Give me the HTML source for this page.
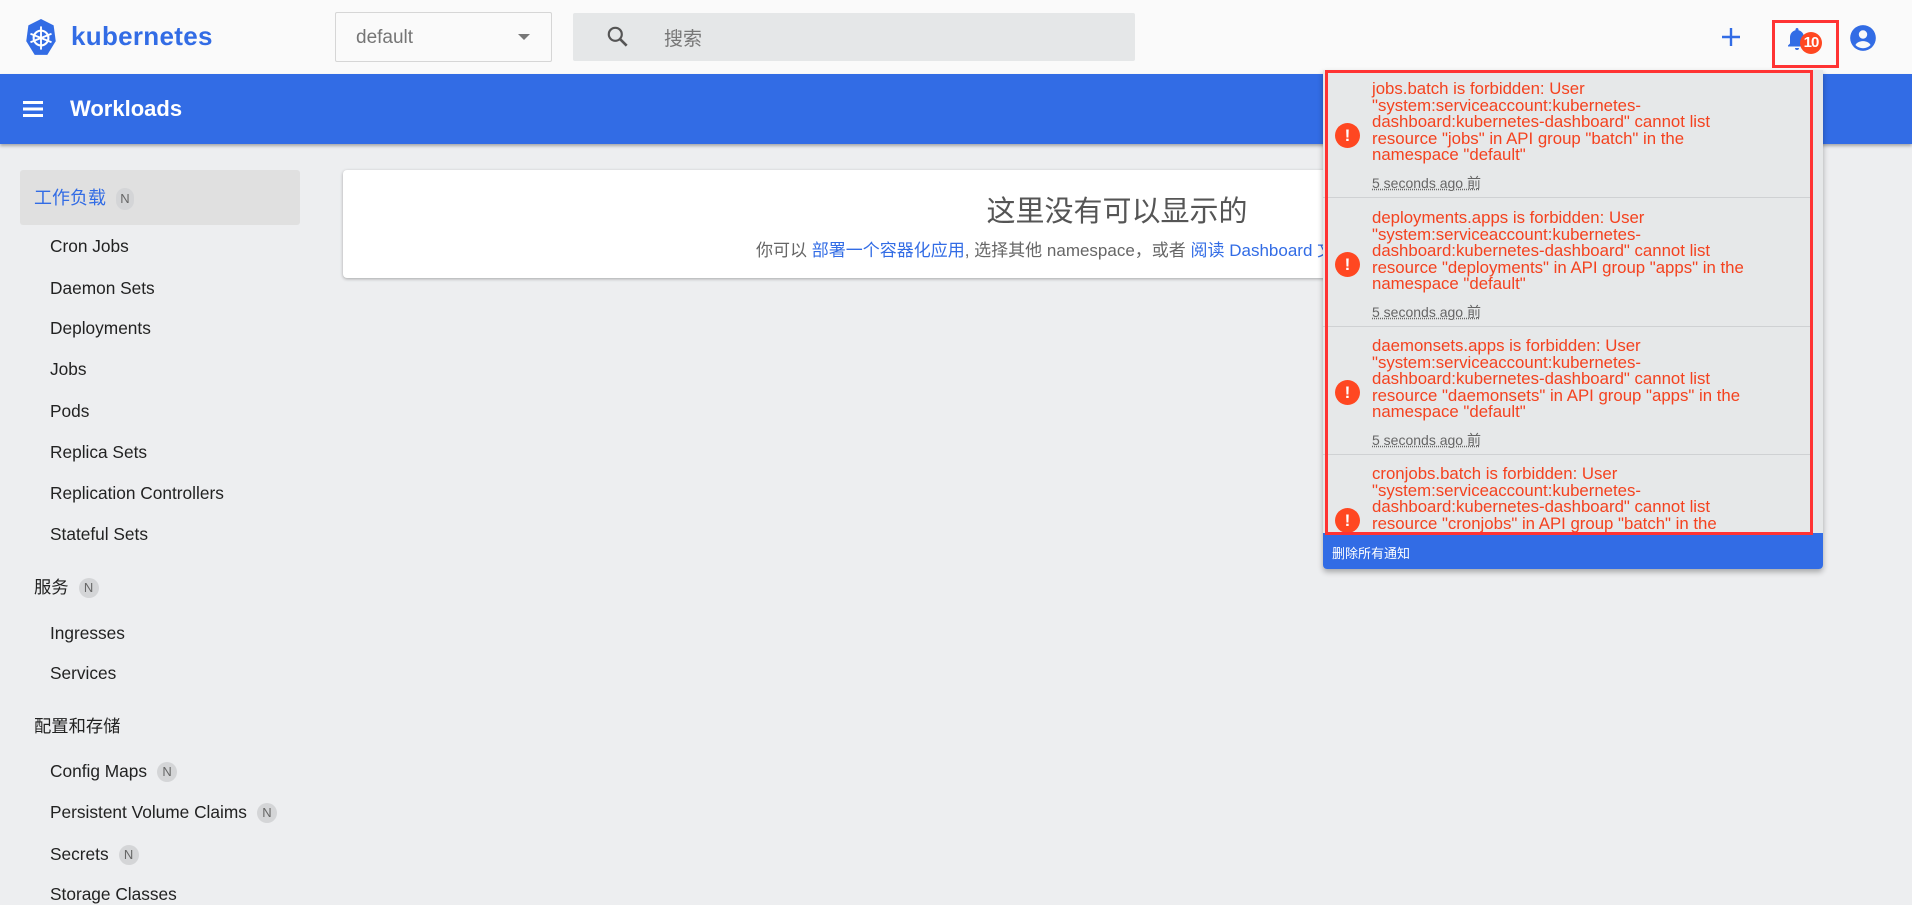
<!DOCTYPE html>
<html><head><meta charset="utf-8"><style>
*{box-sizing:border-box;margin:0;padding:0}
body{width:1912px;height:894px;overflow:hidden;background:#edeef0;font-family:"Liberation Sans","Noto Sans CJK SC",sans-serif;position:relative}
.hdr{position:absolute;left:0;top:0;width:1912px;height:74px;background:#fafafa}
.bar{position:absolute;left:0;top:74px;width:1912px;height:70px;background:#326ce5;box-shadow:0 2px 3px rgba(0,0,0,.3)}
.abs{position:absolute}
.side{position:absolute;left:50px;font-size:17.3px;color:#222}
.grp{position:absolute;left:34px;font-size:17.3px;color:#222}
.n{display:inline-block;width:20px;height:20px;border-radius:10px;background:#d4d5d7;color:#666;font-size:13px;text-align:center;line-height:20px;margin-left:10px;vertical-align:1px}
.pop{position:absolute;left:1323px;top:70px;width:500px;height:499px;background:#e6e8e9;border-radius:0 0 4px 4px;box-shadow:0 3px 6px rgba(0,0,0,.3);overflow:hidden}
.item{position:absolute;left:0;width:490px;height:128px;border-bottom:1px solid #cfd1d3}
.msg{position:absolute;left:49px;top:11px;width:386px;font-size:16.8px;line-height:16.5px;color:#f4421f}
.ts{position:absolute;left:49px;font-size:14px;color:#666;text-decoration:underline dotted}
.ic{position:absolute;left:12px;width:25px;height:25px;border-radius:50%;background:#ff4721;color:#fff;font-weight:bold;font-size:17px;text-align:center;line-height:25px}
</style></head><body>
<div class="hdr"></div>
<svg class="abs" style="left:24px;top:18px" width="34" height="40" viewBox="0 0 28 38"><polygon points="14,1 26,7 28,22 20,35 8,35 0,22 2,7" fill="#326ce5"/><circle cx="14" cy="19" r="7" fill="none" stroke="#fff" stroke-width="2"/><g stroke="#fff" stroke-width="1.8"><line x1="14" y1="8" x2="14" y2="30"/><line x1="4" y1="15" x2="24" y2="23"/><line x1="24" y1="15" x2="4" y2="23"/></g></svg>
<div class="abs" style="left:71px;top:21px;font-size:26px;font-weight:bold;color:#326ce5;letter-spacing:0.3px">kubernetes</div>
<div class="abs" style="left:335px;top:12px;width:217px;height:50px;border:1px solid #d6d6d6;border-radius:2px;background:#fafafa"></div>
<div class="abs" style="left:356px;top:27px;font-size:19px;color:#757575">default</div>
<div class="abs" style="left:518px;top:34px;width:0;height:0;border-left:6px solid transparent;border-right:6px solid transparent;border-top:6px solid #777"></div>
<div class="abs" style="left:573px;top:13px;width:562px;height:48px;background:#e5e7e8;border-radius:2px"></div>
<svg class="abs" style="left:605px;top:24px" width="26" height="26" viewBox="0 0 24 24"><circle cx="9.5" cy="9.5" r="6" fill="none" stroke="#555" stroke-width="2"/><line x1="14" y1="14" x2="20" y2="20" stroke="#555" stroke-width="2.4"/></svg>
<div class="abs" style="left:664px;top:24px;font-size:19px;color:#777">搜索</div>
<svg class="abs" style="left:1719px;top:25px" width="24" height="24" viewBox="0 0 24 24"><path d="M12 3v18M3 12h18" stroke="#326ce5" stroke-width="2.4"/></svg>
<svg class="abs" style="left:1785px;top:26px" width="24" height="26" viewBox="0 0 24 26"><path d="M12 2c-1 0-1.5.7-1.5 1.5v.7C7 5 5 8 5 11.5v6L3 19.5v1h18v-1l-2-2v-6C19 8 17 5 13.5 4.2v-.7C13.5 2.7 13 2 12 2zM10 22a2 2 0 0 0 4 0z" fill="#326ce5"/></svg>
<div class="abs" style="left:1800px;top:32px;width:22px;height:22px;border-radius:11px;background:#ff4721;color:#fff;font-size:15px;font-weight:bold;text-align:center;line-height:22px;letter-spacing:-1px">10</div>
<div class="abs" style="left:1772px;top:20px;width:67px;height:48px;border:3px solid #f33"></div>
<svg class="abs" style="left:1849px;top:24px" width="28" height="28" viewBox="0 0 24 24"><circle cx="12" cy="12" r="11" fill="#326ce5"/><circle cx="12" cy="9" r="3.6" fill="#fafafa"/><path d="M5.5 18c1.5-2.5 4-3.3 6.5-3.3s5 .8 6.5 3.3A9 9 0 0 1 5.5 18z" fill="#fafafa"/></svg>
<div class="bar"></div>
<svg class="abs" style="left:23px;top:101px" width="20" height="16" viewBox="0 0 20 16"><path d="M0 1.5h20M0 8h20M0 14.5h20" stroke="#fff" stroke-width="3"/></svg>
<div class="abs" style="left:70px;top:96px;font-size:22px;font-weight:bold;color:#fff">Workloads</div>
<div class="abs" style="left:20px;top:170px;width:280px;height:55px;background:#e0e0e0;border-radius:3px"></div>
<div class="abs" style="left:34px;top:184px;font-size:18px;color:#326ce5">工作负载<span class="n" style="width:18px;height:22px;line-height:22px">N</span></div>
<div class="side" style="top:236px">Cron Jobs</div>
<div class="side" style="top:278px">Daemon Sets</div>
<div class="side" style="top:318px">Deployments</div>
<div class="side" style="top:359px">Jobs</div>
<div class="side" style="top:401px">Pods</div>
<div class="side" style="top:442px">Replica Sets</div>
<div class="side" style="top:483px">Replication Controllers</div>
<div class="side" style="top:524px">Stateful Sets</div>
<div class="grp" style="top:573px">服务<span class="n">N</span></div>
<div class="side" style="top:623px">Ingresses</div>
<div class="side" style="top:663px">Services</div>
<div class="grp" style="top:712px">配置和存储</div>
<div class="side" style="top:761px">Config Maps<span class="n">N</span></div>
<div class="side" style="top:802px">Persistent Volume Claims<span class="n">N</span></div>
<div class="side" style="top:844px">Secrets<span class="n">N</span></div>
<div class="side" style="top:884px">Storage Classes</div>
<div class="abs" style="left:343px;top:170px;width:1470px;height:108px;background:#fff;border-radius:4px;box-shadow:0 1px 3px rgba(0,0,0,.3)"></div>
<div class="abs" style="left:343px;top:188px;width:1548px;text-align:center;font-size:29px;color:#555">这里没有可以显示的</div>
<div class="abs" style="left:756px;top:236px;font-size:17px;color:#666;white-space:nowrap">你可以 <span style="color:#326ce5">部署一个容器化应用</span>, 选择其他 namespace，或者 <span style="color:#326ce5">阅读 Dashboard 文档</span></div>
<div class="pop">
 <div class="item" style="top:0"><div class="ic" style="top:53px">!</div><div class="msg">jobs.batch is forbidden: User "system:serviceaccount:kubernetes-dashboard:kubernetes-dashboard" cannot list resource "jobs" in API group "batch" in the namespace "default"</div><div class="ts" style="top:103px">5 seconds ago 前</div></div>
 <div class="item" style="top:129px"><div class="ic" style="top:53px">!</div><div class="msg">deployments.apps is forbidden: User "system:serviceaccount:kubernetes-dashboard:kubernetes-dashboard" cannot list resource "deployments" in API group "apps" in the namespace "default"</div><div class="ts" style="top:103px">5 seconds ago 前</div></div>
 <div class="item" style="top:257px"><div class="ic" style="top:53px">!</div><div class="msg">daemonsets.apps is forbidden: User "system:serviceaccount:kubernetes-dashboard:kubernetes-dashboard" cannot list resource "daemonsets" in API group "apps" in the namespace "default"</div><div class="ts" style="top:103px">5 seconds ago 前</div></div>
 <div class="item" style="top:385px;border:none"><div class="ic" style="top:53px">!</div><div class="msg">cronjobs.batch is forbidden: User "system:serviceaccount:kubernetes-dashboard:kubernetes-dashboard" cannot list resource "cronjobs" in API group "batch" in the namespace "default"</div></div>
 <div class="abs" style="left:0;top:463px;width:500px;height:36px;background:#326ce5;color:#fff;font-size:13px;padding:10px 0 0 9px">删除所有通知</div>
</div>
<div class="abs" style="left:1325px;top:70px;width:488px;height:465px;border:3px solid #f33"></div>
</body></html>
